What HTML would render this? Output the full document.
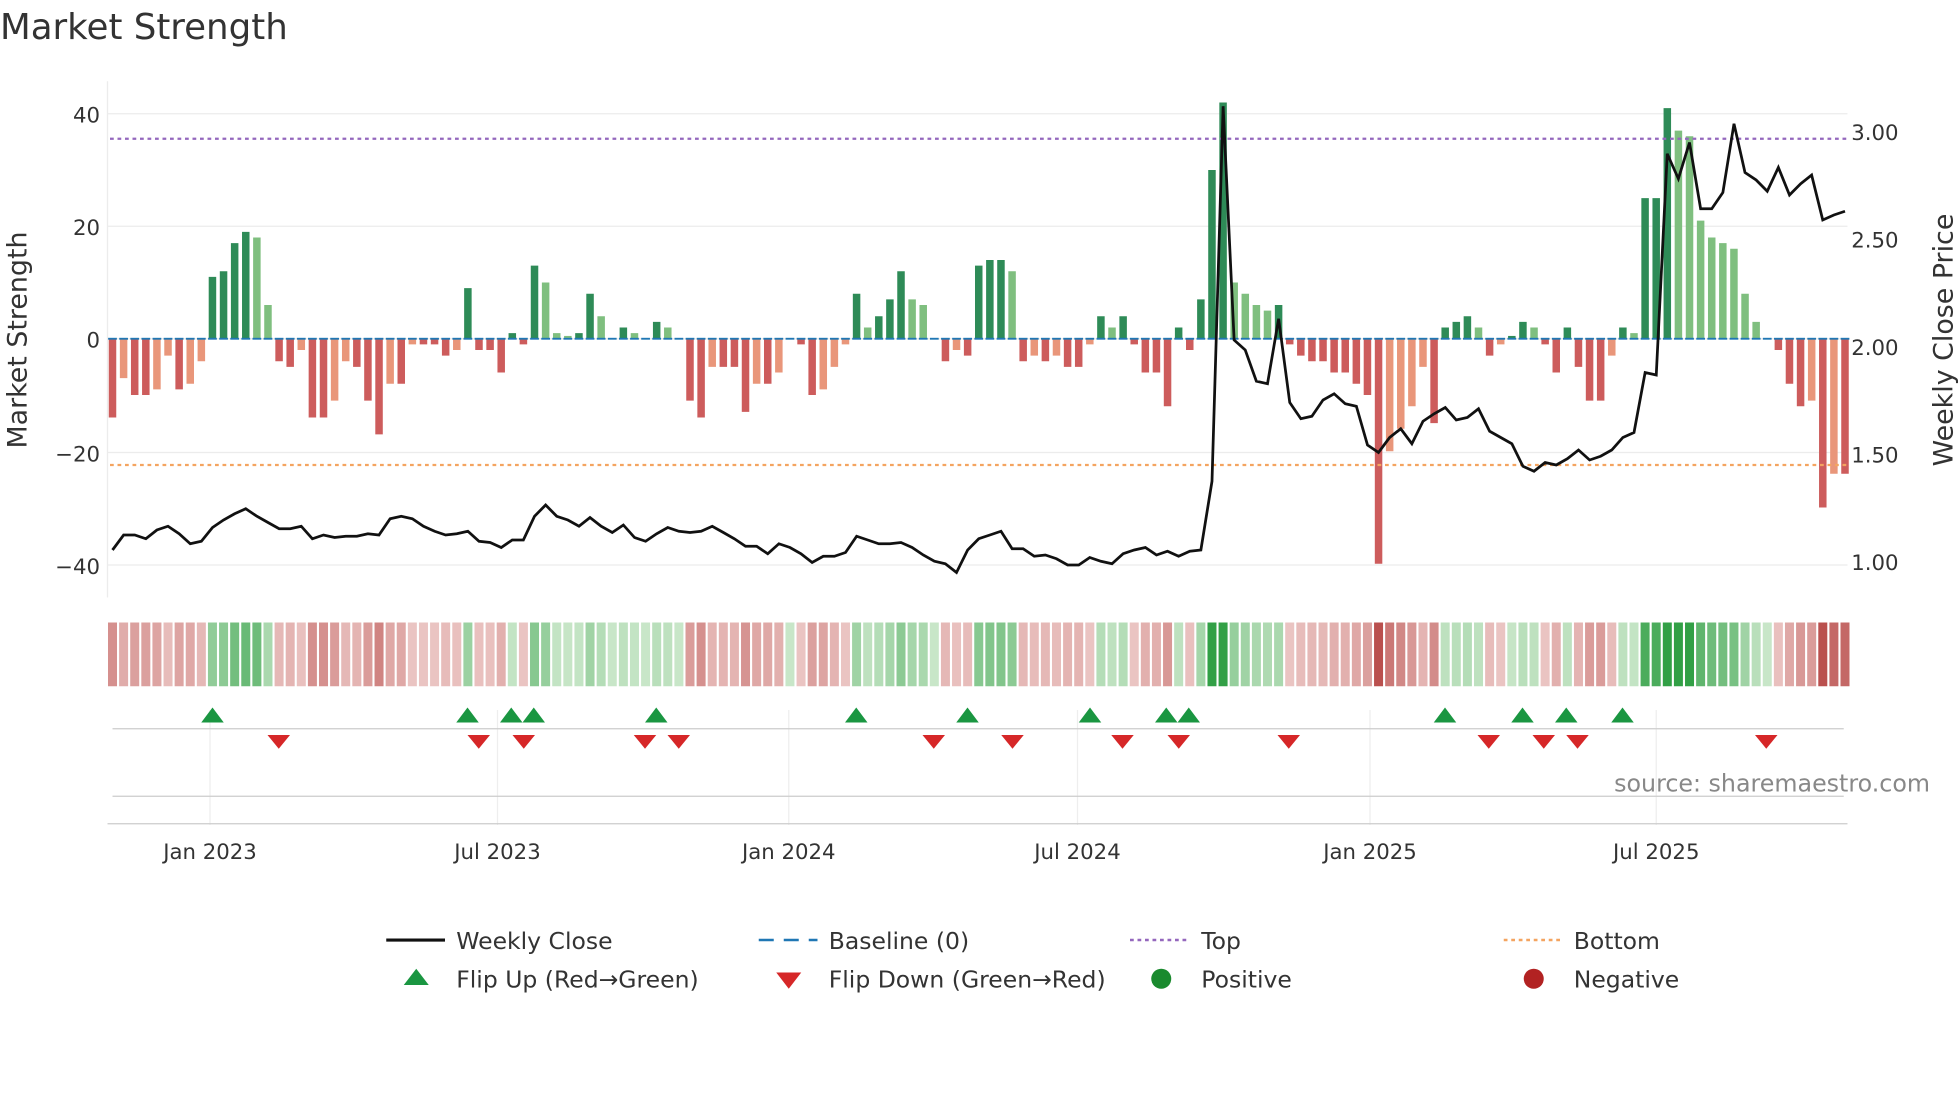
<!DOCTYPE html>
<html><head><meta charset="utf-8"><style>
html,body{margin:0;padding:0;background:#fff;}
svg{display:block;font-family:"DejaVu Sans","Liberation Sans",sans-serif;}
</style></head><body>
<svg id="s" width="1960" height="1102" viewBox="0 0 1568 881.6" xmlns="http://www.w3.org/2000/svg">
<rect width="1568" height="882" fill="#fff"/>
<text x="0" y="31" font-size="28.5" fill="#333">Market Strength</text>
<g stroke="#ececec" stroke-width="1">
<line x1="86" x2="1478" y1="91" y2="91"/><line x1="86" x2="1478" y1="181" y2="181"/>
<line x1="86" x2="1478" y1="271" y2="271"/><line x1="86" x2="1478" y1="362" y2="362"/>
<line x1="86" x2="1478" y1="452" y2="452"/>
<line x1="86" x2="86" y1="65" y2="478"/>
</g>
<g font-size="17" fill="#333" text-anchor="end">
<text x="80" y="98">40</text><text x="80" y="188">20</text><text x="80" y="278">0</text>
<text x="80" y="369">−20</text><text x="80" y="459">−40</text>
</g>
<g font-size="17" fill="#333">
<text x="1481" y="112">3.00</text><text x="1481" y="198">2.50</text><text x="1481" y="284">2.00</text>
<text x="1481" y="370">1.50</text><text x="1481" y="456">1.00</text>
</g>
<text transform="translate(21,272) rotate(-90)" font-size="21.5" fill="#333" text-anchor="middle">Market Strength</text>
<text transform="translate(1562,272) rotate(-90)" font-size="21.5" fill="#333" text-anchor="middle">Weekly Close Price</text>
<g id="bars"></g>
<line x1="88" x2="1478" y1="111" y2="111" stroke="#9467bd" stroke-width="1.8" stroke-dasharray="3,3"/>
<line x1="88" x2="1478" y1="372" y2="372" stroke="#f4a460" stroke-width="1.8" stroke-dasharray="3,3"/>
<polyline id="close" fill="none" stroke="#111" stroke-width="2.2"/>
<g id="heat"></g>
<g stroke="#eee" stroke-width="1">
<line x1="168" x2="168" y1="568" y2="660"/><line x1="398" x2="398" y1="568" y2="660"/>
<line x1="631" x2="631" y1="568" y2="660"/><line x1="862" x2="862" y1="568" y2="660"/>
<line x1="1096" x2="1096" y1="568" y2="660"/><line x1="1325" x2="1325" y1="568" y2="660"/>
</g>
<line x1="90" x2="1475" y1="583" y2="583" stroke="#ccc"/>
<line x1="90" x2="1475" y1="637" y2="637" stroke="#ccc"/>
<line x1="86" x2="1478" y1="659" y2="659" stroke="#ccc"/>
<g id="mk"></g>
<text x="1544" y="633" font-size="19" fill="#888" text-anchor="end">source: sharemaestro.com</text>
<g font-size="17" fill="#333" text-anchor="middle">
<text x="168" y="687">Jan 2023</text><text x="398" y="687">Jul 2023</text><text x="631" y="687">Jan 2024</text>
<text x="862" y="687">Jul 2024</text><text x="1096" y="687">Jan 2025</text><text x="1325" y="687">Jul 2025</text>
</g>
<g font-size="18.8" fill="#333">
<line x1="309" x2="356" y1="752" y2="752" stroke="#111" stroke-width="2.5"/><text x="365" y="759">Weekly Close</text>
<line x1="607" x2="654" y1="752" y2="752" stroke="#1f77b4" stroke-width="2" stroke-dasharray="12,8"/><text x="663" y="759">Baseline (0)</text>
<line x1="904" x2="951" y1="752" y2="752" stroke="#9467bd" stroke-width="2" stroke-dasharray="3,3"/><text x="961" y="759">Top</text>
<line x1="1203" x2="1250" y1="752" y2="752" stroke="#f4a460" stroke-width="2" stroke-dasharray="3,3"/><text x="1259" y="759">Bottom</text>
<polygon points="323,788 343,788 333,775" fill="#1a9641"/><text x="365" y="790">Flip Up (Red→Green)</text>
<polygon points="621,778 641,778 631,791" fill="#d62728"/><text x="663" y="790">Flip Down (Green→Red)</text>
<circle cx="929" cy="783" r="8" fill="#1a8a2e"/><text x="961" y="790">Positive</text>
<circle cx="1227" cy="783" r="8" fill="#b22222"/><text x="1259" y="790">Negative</text>
</g>
</svg>
<script>
var v=[-14,-7,-10,-10,-9,-3,-9,-8,-4,11,12,17,19,18,6,-4,-5,-2,-14,-14,-11,-4,-5,-11,-17,-8,-8,-1,-1,-1,-3,-2,9,-2,-2,-6,1,-1,13,10,1,0.5,1,8,4,0,2,1,0,3,2,0,-11,-14,-5,-5,-5,-13,-8,-8,-6,0,-1,-10,-9,-5,-1,8,2,4,7,12,7,6,0,-4,-2,-3,13,14,14,12,-4,-3,-4,-3,-5,-5,-1,4,2,4,-1,-6,-6,-12,2,-2,7,30,42,10,8,6,5,6,-1,-3,-4,-4,-6,-6,-8,-10,-40,-20,-16,-12,-5,-15,2,3,4,2,-3,-1,0.5,3,2,-1,-6,2,-5,-11,-11,-3,2,1,25,25,41,37,36,21,18,17,16,8,3,0,-2,-8,-12,-11,-30,-24,-24];
var c=[440,428,428,431,424,421,427,435,433,422,416,411,407,413,418,423,423,421,431,428,430,429,429,427,428,415,413,415,421,425,428,427,425,433,434,438,432,432,413,404,413,416,421,414,421,426,420,430,433,427,422,425,426,425,421,426,431,437,437,443,435,438,443,450,445,445,442,429,432,435,435,434,438,444,449,451,458,440,431,428,425,439,439,445,444,447,452,452,446,449,451,443,440,438,444,441,445,441,440,385,85,272,280,305,307,255,322,335,333,320,315,323,325,356,362,350,343,355,337,331,326,336,334,327,345,350,355,373,377,370,372,367,360,368,365,360,350,346,298,300,123,143,114,167,167,154,99,138,144,153,134,156,147,140,176,172,169];
var n=v.length,x0=90,x1=1476,st=(x1-x0)/(n-1),h="";
for(var i=0;i<n;i++){var x=x0+i*st,val=v[i],p=i?v[i-1]:0,col;
if(val>=0)col=val>=p?"#2e8b57":"#7fbf7f";else col=val<=p?"#cd5c5c":"#e9967a";
var y=271-val*4.5;h+='<rect x="'+(x-3)+'" y="'+Math.min(y,271)+'" width="6" height="'+Math.abs(val*4.5)+'" fill="'+col+'"/>';
h+='<line x1="'+(x-3.5)+'" x2="'+(x+3.5)+'" y1="271" y2="271" stroke="#1f77b4" stroke-width="1.5"/>';}
document.getElementById("bars").innerHTML=h;
var m=c.length,cs=(x1-x0)/(m-1),pts=[];for(i=0;i<m;i++)pts.push((x0+i*cs).toFixed(1)+","+c[i]);
document.getElementById("close").setAttribute("points",pts.join(" "));
h="";for(i=0;i<n;i++){var x=x0+i*st,val=v[i],a=Math.min(1,Math.abs(val)/30),col;
if(val>=0)col="rgb("+Math.round(200-150*a)+","+Math.round(230-70*a)+","+Math.round(200-130*a)+")";
else col="rgb("+Math.round(236-50*a)+","+Math.round(200-120*a)+","+Math.round(198-120*a)+")";
h+='<rect x="'+(x-3.6)+'" y="498" width="7.2" height="51" fill="'+col+'"/>';}
document.getElementById("heat").innerHTML=h;
var up=[170,374,409,427,525,685,774,872,933,951,1156,1218,1253,1298],dn=[223,383,419,516,543,747,810,898,943,1031,1191,1235,1262,1413];
h="";up.forEach(function(x){h+='<polygon points="'+(x-9)+',578 '+(x+9)+',578 '+x+',566" fill="#1a9641"/>';});
dn.forEach(function(x){h+='<polygon points="'+(x-9)+',588 '+(x+9)+',588 '+x+',599" fill="#d62728"/>';});
document.getElementById("mk").innerHTML=h;
</script>
</body></html>
